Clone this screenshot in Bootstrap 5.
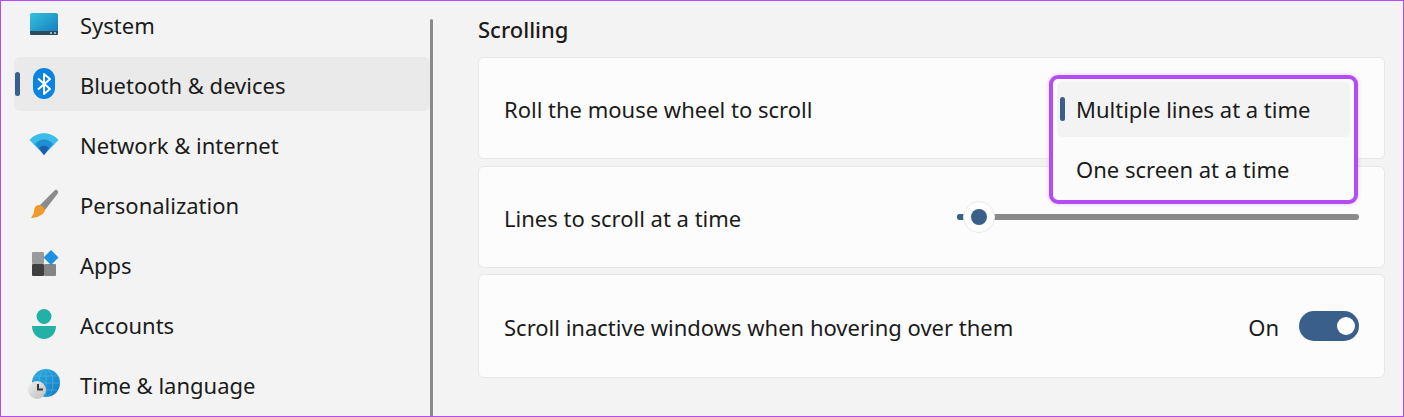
<!DOCTYPE html>
<html lang="en">
<head>
<meta charset="utf-8">
<title>Scrolling settings</title>
<link href="https://cdn.jsdelivr.net/npm/bootstrap@5.3.0/dist/css/bootstrap.min.css" rel="stylesheet">
<style>
html,body{height:100%;}
body{background:#f3f3f3;color:#1b1b1b;font-family:"Noto Sans","Open Sans",sans-serif;font-size:22px;line-height:30px;overflow:hidden;}
.frame{width:1404px;height:417px;border:1px solid #b44cf5;overflow:hidden;position:relative;}
.side-pane{width:429px;flex:none;padding:0 0 0 13px;margin-top:-4px;gap:6px;}
.nav-entry{height:54px;border-radius:6px;position:relative;padding-left:15px;gap:21px;}
.nav-entry.is-current{background:#eaeaea;}
.nav-entry.is-current::before{content:"";position:absolute;left:1px;top:15px;width:5px;height:24px;border-radius:3px;background:#3a5f8b;}
.nav-glyph{width:30px;height:30px;flex:none;display:block;overflow:visible;}
.nav-label{white-space:nowrap;padding-top:2px;}
.split-bar{width:3px;flex:none;margin-top:18px;background:#8a8a8a;border-radius:2px;height:420px;}
.main-pane{width:907px;flex:none;margin-left:45px;position:relative;}
.pane-title{font-size:22px;font-weight:500;line-height:30px;margin:13px 0 13px;}
.set-card{background:#fcfcfc;border:1px solid #e7e7e7;border-radius:6px;padding:0 25px;}
.set-text{padding-top:2px;}
.h-a{height:102px;margin-bottom:7px;}
.h-b{height:102px;margin-bottom:6px;}
.h-c{height:104px;}
.slide-track{width:402px;height:6px;position:relative;background:#8a8a8a;border-radius:3px;}
.slide-track::before{content:"";position:absolute;left:0;top:0;width:8px;height:6px;border-radius:3px;background:#3a5f8b;}
.slide-mask{position:absolute;left:6px;top:-13px;width:32px;height:32px;border-radius:50%;background:#fff;border:1px solid #e9e9e9;}
.slide-mask::after{content:"";position:absolute;left:7px;top:7px;width:16px;height:16px;border-radius:50%;background:#3a5f8b;}
.pill-toggle{width:60px;height:30px;border-radius:15px;background:#3a5f8b;position:relative;margin-left:20px;margin-top:-1px;}
.pill-toggle::after{content:"";position:absolute;right:4px;top:6px;width:18px;height:18px;border-radius:50%;background:#fff;}
.fly-menu{position:absolute;left:571px;top:74px;width:309px;height:129px;background:#fbfbfb;border:4px solid #b44cf5;border-radius:9px;padding:3px 4px;box-shadow:0 0 4px rgba(180,76,245,.3);}
.fly-item{height:55px;padding-left:19px;padding-bottom:2px;border-radius:5px;position:relative;white-space:nowrap;margin-bottom:5px;}
.fly-item.is-picked{background:#f3f3f3;}
.fly-item.is-picked::before{content:"";position:absolute;left:3px;top:15px;width:5px;height:24px;border-radius:3px;background:#3a5f8b;}
</style>
</head>
<body>
<div class="frame d-flex">
  <nav class="side-pane d-flex flex-column">
    <div class="nav-entry d-flex align-items-center">
      <svg class="nav-glyph" viewBox="0 0 30 30"><defs><linearGradient id="g1" x1="0" y1="0" x2="1" y2="1"><stop offset="0" stop-color="#35c1dc"/><stop offset="1" stop-color="#1478bd"/></linearGradient><linearGradient id="g2" x1="0" y1="0" x2="1" y2="1"><stop offset="0" stop-color="#2fb0e0"/><stop offset="1" stop-color="#1478c4"/></linearGradient><linearGradient id="g4" x1="0" y1="0" x2="1" y2="1"><stop offset="0" stop-color="#f0f0f0"/><stop offset="1" stop-color="#bdbdbd"/></linearGradient></defs><rect x="1" y="4" width="28" height="22" rx="2" fill="url(#g1)"/><path d="M1 22H29V24.500Q29 26 27.500 26H2.500Q1 26 1 24.500Z" fill="#2d4a5e"/><circle cx="22" cy="24" r="1" fill="#a9d8ee"/><circle cx="26" cy="24" r="1" fill="#a9d8ee"/></svg>
      <span class="nav-label">System</span>
    </div>
    <div class="nav-entry is-current d-flex align-items-center">
      <svg class="nav-glyph" viewBox="0 0 30 30"><rect x="4" y="-1" width="22" height="31" rx="11" fill="#0a84e3"/><path d="M9 9.500 21 20 15 25V5l6 5L9 20.500" fill="none" stroke="#fff" stroke-width="2" stroke-linejoin="round"/></svg>
      <span class="nav-label">Bluetooth &amp; devices</span>
    </div>
    <div class="nav-entry d-flex align-items-center">
      <svg class="nav-glyph" viewBox="0 0 30 30"><path d="M.5 11C8 2 22 2 29.500 11L15 26Z" fill="#3cbde8"/><path d="M6 15C11 9 19 9 24 15L15 26Z" fill="#1f8fd4"/><path d="M10 19C13 16 17 16 20 19L15 26Z" fill="#1e5ea8"/></svg>
      <span class="nav-label">Network &amp; internet</span>
    </div>
    <div class="nav-entry d-flex align-items-center">
      <svg class="nav-glyph" viewBox="0 0 30 30"><path d="M25 2Q27 0 28.500 1.500 30 3 28 5.500L16 21 10 17Z" fill="#8b8b8b"/><path d="M7 17Q10 15 13 17L16 20Q16 24 12 26 8 29 2 29 5 25 5 22 5 19 7 17Z" fill="#ee9a2e"/></svg>
      <span class="nav-label">Personalization</span>
    </div>
    <div class="nav-entry d-flex align-items-center">
      <svg class="nav-glyph" viewBox="0 0 30 30"><rect x="3" y="3" width="12" height="12" rx="1" fill="#9a9a9a"/><rect x="3" y="15" width="12" height="12" rx="1" fill="#3f3f3f"/><rect x="15" y="15" width="12" height="12" rx="1" fill="#858585"/><path d="M22 1 29.500 8.500 22 16 14.500 8.500Z" fill="#1c92e0"/></svg>
      <span class="nav-label">Apps</span>
    </div>
    <div class="nav-entry d-flex align-items-center">
      <svg class="nav-glyph" viewBox="0 0 30 30"><circle cx="15" cy="7.500" r="7.500" fill="#22b2a5"/><path d="M3 17H27C27 25 21 30 15 30S3 25 3 17Z" fill="#22b2a5"/></svg>
      <span class="nav-label">Accounts</span>
    </div>
    <div class="nav-entry d-flex align-items-center">
      <svg class="nav-glyph" viewBox="0 0 30 30"><circle cx="17" cy="14" r="14" fill="url(#g2)"/><path d="M17 0V28M3 14H31M6 7H28M6 21H28" stroke="#4dbbe6" stroke-width=".6" fill="none"/><ellipse cx="17" cy="14" rx="7" ry="14" stroke="#4dbbe6" stroke-width=".6" fill="none"/><circle cx="8" cy="21" r="9" fill="url(#g4)"/><path d="M9 15V20.500H14" fill="none" stroke="#3a3a3a" stroke-width="2"/></svg>
      <span class="nav-label">Time &amp; language</span>
    </div>
  </nav>
  <div class="split-bar"></div>
  <main class="main-pane">
    <h2 class="pane-title">Scrolling</h2>
    <div class="set-card h-a d-flex align-items-center justify-content-between"><span class="set-text">Roll the mouse wheel to scroll</span></div>
    <div class="set-card h-b d-flex align-items-center justify-content-between">
      <span class="set-text">Lines to scroll at a time</span>
      <div class="slide-track"><div class="slide-mask"></div></div>
    </div>
    <div class="set-card h-c d-flex align-items-center justify-content-between">
      <span class="set-text">Scroll inactive windows when hovering over them</span>
      <div class="d-flex align-items-center"><span class="set-text">On</span><div class="pill-toggle"></div></div>
    </div>
    <div class="fly-menu">
      <div class="fly-item is-picked d-flex align-items-center">Multiple lines at a time</div>
      <div class="fly-item d-flex align-items-center">One screen at a time</div>
    </div>
  </main>
</div>
<script src="https://cdn.jsdelivr.net/npm/bootstrap@5.3.0/dist/js/bootstrap.bundle.min.js"></script>
</body>
</html>
